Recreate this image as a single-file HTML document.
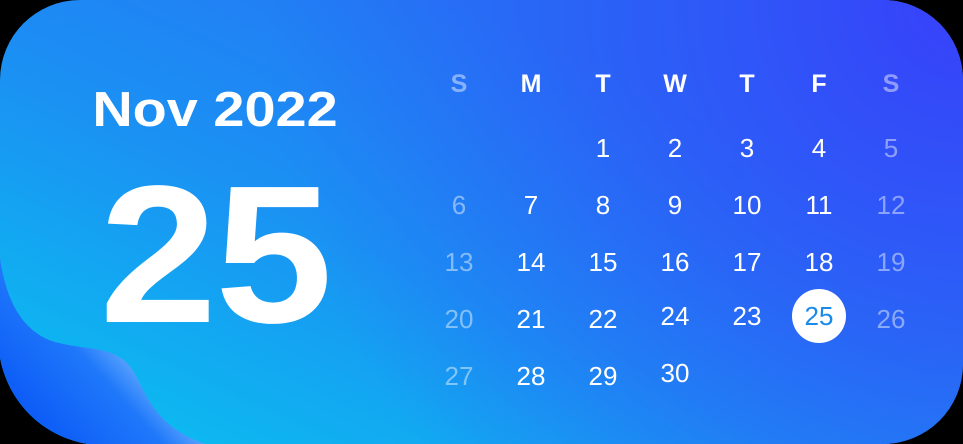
<!DOCTYPE html>
<html><head><meta charset="utf-8"><style>
html,body{margin:0;padding:0;background:#000;width:963px;height:444px;overflow:hidden}
.t{position:absolute;font-family:"Liberation Sans",sans-serif;color:#fff;text-align:center}
.c{position:absolute;width:60px;margin-left:-30px;text-align:center;font-family:"Liberation Sans",sans-serif;color:#fff;font-size:26px;line-height:30px}
.h{font-weight:bold;font-size:25px}
.d{color:rgba(255,255,255,.45)}
</style></head><body>
<svg width="963" height="444" style="position:absolute;left:0;top:0">
<defs>
<linearGradient id="g" x1="200" y1="460" x2="420" y2="-20" gradientUnits="userSpaceOnUse">
<stop offset="0" stop-color="#0cbaf0"/><stop offset="0.5" stop-color="#1a92f3"/><stop offset="1" stop-color="#2478f5"/>
</linearGradient>
<radialGradient id="r" cx="963" cy="0" r="700" gradientUnits="userSpaceOnUse">
<stop offset="0" stop-color="#3840fa" stop-opacity="1"/><stop offset="0.5" stop-color="#3050f8" stop-opacity="0.6"/><stop offset="1" stop-color="#2a60f6" stop-opacity="0"/>
</radialGradient>
<linearGradient id="b" x1="20" y1="420" x2="130" y2="320" gradientUnits="userSpaceOnUse">
<stop offset="0" stop-color="#0a58f6"/><stop offset="0.6" stop-color="#1f78fa"/><stop offset="1" stop-color="#8cc8ff"/>
</linearGradient>
</defs>
<path d="M0,80 A80,80 0 0 1 80,0 L883,0 A80,80 0 0 1 963,80 L963,364 A80,80 0 0 1 883,444 L0,444 Z" fill="url(#g)"/>
<path d="M0,80 A80,80 0 0 1 80,0 L883,0 A80,80 0 0 1 963,80 L963,364 A80,80 0 0 1 883,444 L0,444 Z" fill="url(#r)"/>
<path d="M0,358 C8,400 40,436 88,444 L0,444 Z" fill="#000"/>
<path d="M0,258 C6,300 22,332 55,342 C85,350 108,346 126,362 C146,382 144,422 205,444 L88,444 C40,436 8,400 0,358 Z" fill="url(#b)"/>
</svg>
<div class="t" style="left:60px;top:80px;width:310px;font-size:49px;font-weight:bold;line-height:60px;transform:scaleX(1.14)">Nov 2022</div>
<div class="t" style="left:60px;top:155px;width:310px;font-size:196px;font-weight:bold;line-height:200px;letter-spacing:-2px;transform:scaleX(1.08)">25</div>
<div style="position:absolute;left:792px;top:289px;width:54px;height:54px;border-radius:50%;background:#fff"></div>
<div class="c h d" style="left:459px;top:69px">S</div>
<div class="c h" style="left:531px;top:69px">M</div>
<div class="c h" style="left:603px;top:69px">T</div>
<div class="c h" style="left:675px;top:69px">W</div>
<div class="c h" style="left:747px;top:69px">T</div>
<div class="c h" style="left:819px;top:69px">F</div>
<div class="c h d" style="left:891px;top:69px">S</div>

<div class="c" style="left:603px;top:133px">1</div>
<div class="c" style="left:675px;top:133px">2</div>
<div class="c" style="left:747px;top:133px">3</div>
<div class="c" style="left:819px;top:133px">4</div>
<div class="c d" style="left:891px;top:133px">5</div>

<div class="c d" style="left:459px;top:190px">6</div>
<div class="c" style="left:531px;top:190px">7</div>
<div class="c" style="left:603px;top:190px">8</div>
<div class="c" style="left:675px;top:190px">9</div>
<div class="c" style="left:747px;top:190px">10</div>
<div class="c" style="left:819px;top:190px">11</div>
<div class="c d" style="left:891px;top:190px">12</div>

<div class="c d" style="left:459px;top:247px">13</div>
<div class="c" style="left:531px;top:247px">14</div>
<div class="c" style="left:603px;top:247px">15</div>
<div class="c" style="left:675px;top:247px">16</div>
<div class="c" style="left:747px;top:247px">17</div>
<div class="c" style="left:819px;top:247px">18</div>
<div class="c d" style="left:891px;top:247px">19</div>

<div class="c d" style="left:459px;top:304px">20</div>
<div class="c" style="left:531px;top:304px">21</div>
<div class="c" style="left:603px;top:304px">22</div>
<div class="c" style="left:675px;top:301px">24</div>
<div class="c" style="left:747px;top:301px">23</div>
<div class="c" style="left:819px;top:301px;color:#1a8ae8">25</div>
<div class="c d" style="left:891px;top:304px">26</div>

<div class="c d" style="left:459px;top:361px">27</div>
<div class="c" style="left:531px;top:361px">28</div>
<div class="c" style="left:603px;top:361px">29</div>
<div class="c" style="left:675px;top:358px">30</div>
</body></html>
